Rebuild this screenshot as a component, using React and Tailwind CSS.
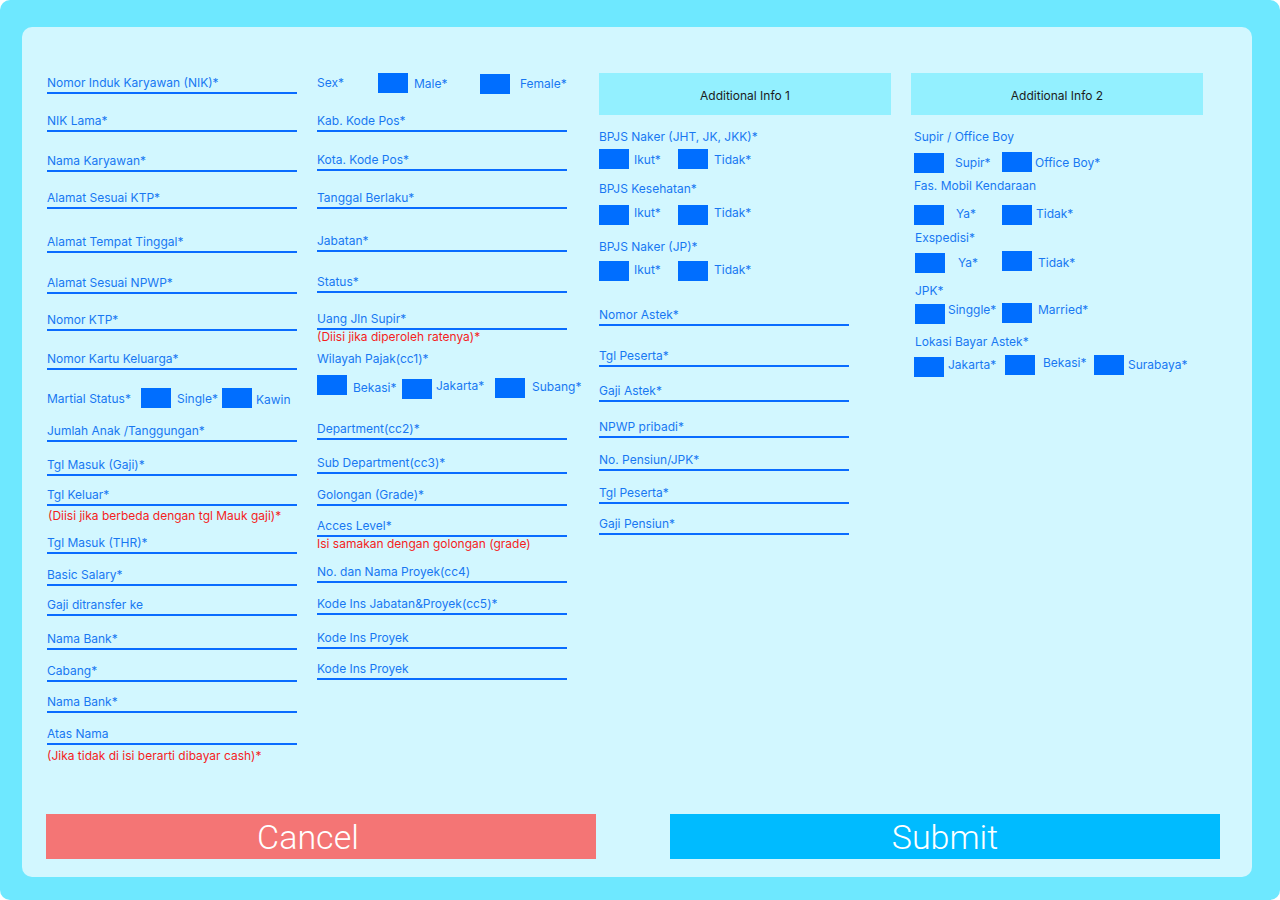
import React from "react";

const Field = ({ label, mt }) => (
  <div className={`${mt} w-[250px] h-[19px] pb-px border-b-2 border-[#0a6cff]`}>
    <p className="text-[12px] leading-4 text-[#1877f2] whitespace-nowrap">{label}</p>
  </div>
);

const Note = ({ text, mt, className = "" }) => (
  <p className={`${mt} ${className} text-[12px] leading-[14px] text-[#f51d1d] whitespace-nowrap`}>{text}</p>
);

const Label = ({ text, mt, className = "" }) => (
  <p className={`${mt} ${className} text-[12px] leading-4 text-[#1877f2] whitespace-nowrap`}>{text}</p>
);

const Box = ({ className = "" }) => <div className={`${className} w-[30px] h-5 bg-[#006eff] shrink-0`} />;

const Opt = ({ text, className = "" }) => (
  <span className={`${className} text-[12px] leading-4 text-[#1877f2] whitespace-nowrap shrink-0`}>{text}</span>
);

const Header = ({ title }) => (
  <div className="w-[292px] h-[42px] bg-[#93f0ff] flex items-center justify-center pt-[3px]">
    <span className="text-[12px] text-[#1c1c1c]">{title}</span>
  </div>
);

const App = () => {
  return (
    <div className="w-[1280px] h-[900px] bg-[#6ee8ff] rounded-[10px] pt-[27px] pl-[22px] font-['Inter',sans-serif]">
      <div className="w-[1230px] h-[850px] bg-[#d2f7ff] rounded-[10px] flex flex-col">
        <div className="flex pt-[46px] pl-[25px]">
          {/* kolom 1 */}
          <div className="w-[250px] flex flex-col">
            <Field label="Nomor Induk Karyawan (NIK)*" mt="mt-[2px]" />
            <Field label="NIK Lama*" mt="mt-[19px]" />
            <Field label="Nama Karyawan*" mt="mt-[21px]" />
            <Field label="Alamat Sesuai KTP*" mt="mt-[18px]" />
            <Field label="Alamat Tempat Tinggal*" mt="mt-[25px]" />
            <Field label="Alamat Sesuai NPWP*" mt="mt-[22px]" />
            <Field label="Nomor KTP*" mt="mt-[18px]" />
            <Field label="Nomor Kartu Keluarga*" mt="mt-[20px]" />
            <div className="mt-[18px] h-5 flex items-center">
              <Opt text="Martial Status*" className="w-[94px] mt-[2px]" />
              <Box />
              <Opt text="Single*" className="ml-[6px] w-[45px] mt-[2px]" />
              <Box />
              <Opt text="Kawin" className="ml-[4px] mt-[3px]" />
            </div>
            <Field label="Jumlah Anak /Tanggungan*" mt="mt-[15px]" />
            <Field label="Tgl Masuk (Gaji)*" mt="mt-[15px]" />
            <Field label="Tgl Keluar*" mt="mt-[11px]" />
            <Note text="(Diisi jika berbeda dengan tgl Mauk gaji)*" mt="mt-[3px]" className="ml-px" />
            <Field label="Tgl Masuk (THR)*" mt="mt-[12px]" />
            <Field label="Basic Salary*" mt="mt-[13px]" />
            <Field label="Gaji ditransfer ke" mt="mt-[11px]" />
            <Field label="Nama Bank*" mt="mt-[15px]" />
            <Field label="Cabang*" mt="mt-[13px]" />
            <Field label="Nama Bank*" mt="mt-[12px]" />
            <Field label="Atas Nama" mt="mt-[13px]" />
            <Note text="(Jika tidak di isi berarti dibayar cash)*" mt="mt-[4px]" />
          </div>

          {/* kolom 2 */}
          <div className="ml-[20px] w-[250px] flex flex-col">
            <div className="h-5 flex items-center">
              <Opt text="Sex*" className="w-[61px]" />
              <Box />
              <Opt text="Male*" className="ml-[6px] w-[66px] mt-[2px]" />
              <Box className="mt-[2px]" />
              <Opt text="Female*" className="ml-[10px] mt-[1px]" />
            </div>
            <Field label="Kab. Kode Pos*" mt="mt-[20px]" />
            <Field label="Kota. Kode Pos*" mt="mt-[20px]" />
            <Field label="Tanggal Berlaku*" mt="mt-[19px]" />
            <Field label="Jabatan*" mt="mt-[24px]" />
            <Field label="Status*" mt="mt-[22px]" />
            <Field label="Uang Jln Supir*" mt="mt-[18px]" />
            <Note text="(Diisi jika diperoleh ratenya)*" mt="mt-0" />
            <Label text="Wilayah Pajak(cc1)*" mt="mt-[7px]" />
            <div className="mt-[8px] h-[24px] flex items-start">
              <Box />
              <Opt text="Bekasi*" className="ml-[6px] w-[49px] mt-[5px]" />
              <Box className="mt-[4px]" />
              <Opt text="Jakarta*" className="ml-[4px] w-[59px] mt-[3px]" />
              <Box className="mt-[3px]" />
              <Opt text="Subang*" className="ml-[7px] mt-[4px]" />
            </div>
            <Field label="Department(cc2)*" mt="mt-[22px]" />
            <Field label="Sub Department(cc3)*" mt="mt-[15px]" />
            <Field label="Golongan (Grade)*" mt="mt-[13px]" />
            <Field label="Acces Level*" mt="mt-[12px]" />
            <Note text="Isi samakan dengan golongan (grade)" mt="mt-0" />
            <Field label="No. dan Nama Proyek(cc4)" mt="mt-[13px]" />
            <Field label="Kode Ins Jabatan&Proyek(cc5)*" mt="mt-[13px]" />
            <Field label="Kode Ins Proyek" mt="mt-[15px]" />
            <Field label="Kode Ins Proyek" mt="mt-[12px]" />
          </div>

          {/* kolom 3 */}
          <div className="ml-[32px] w-[292px] flex flex-col">
            <Header title="Additional Info 1" />
            <Label text="BPJS Naker (JHT, JK, JKK)*" mt="mt-[14px]" />
            <div className="mt-[4px] h-5 flex items-start">
              <Box />
              <Opt text="Ikut*" className="ml-[5px] w-[44px] mt-[3px]" />
              <Box />
              <Opt text="Tidak*" className="ml-[6px] mt-[3px]" />
            </div>
            <Label text="BPJS Kesehatan*" mt="mt-[12px]" />
            <div className="mt-[8px] h-5 flex items-start">
              <Box />
              <Opt text="Ikut*" className="ml-[5px] w-[44px]" />
              <Box />
              <Opt text="Tidak*" className="ml-[6px]" />
            </div>
            <Label text="BPJS Naker (JP)*" mt="mt-[14px]" />
            <div className="mt-[6px] h-5 flex items-start">
              <Box />
              <Opt text="Ikut*" className="ml-[5px] w-[44px] mt-px" />
              <Box />
              <Opt text="Tidak*" className="ml-[6px] mt-px" />
            </div>
            <Field label="Nomor Astek*" mt="mt-[26px]" />
            <Field label="Tgl Peserta*" mt="mt-[22px]" />
            <Field label="Gaji Astek*" mt="mt-[16px]" />
            <Field label="NPWP pribadi*" mt="mt-[17px]" />
            <Field label="No. Pensiun/JPK*" mt="mt-[14px]" />
            <Field label="Tgl Peserta*" mt="mt-[14px]" />
            <Field label="Gaji Pensiun*" mt="mt-[12px]" />
          </div>

          {/* kolom 4 */}
          <div className="ml-[20px] w-[292px] flex flex-col">
            <Header title="Additional Info 2" />
            <Label text="Supir / Office Boy" mt="mt-[14px]" className="ml-[3px]" />
            <div className="mt-[7px] ml-[3px] h-[21px] flex items-start">
              <Box className="mt-px" />
              <Opt text="Supir*" className="ml-[11px] w-[47px] mt-[3px]" />
              <Box />
              <Opt text="Office Boy*" className="ml-[3px] mt-[3px]" />
            </div>
            <Label text="Fas. Mobil Kendaraan" mt="mt-[5px]" className="ml-[3px]" />
            <div className="mt-[11px] ml-[3px] h-5 flex items-start">
              <Box />
              <Opt text="Ya*" className="ml-[12px] w-[46px] mt-px" />
              <Box />
              <Opt text="Tidak*" className="ml-[4px] mt-px" />
            </div>
            <Label text="Exspedisi*" mt="mt-[5px]" className="ml-[4px]" />
            <div className="mt-[5px] ml-[4px] h-[22px] flex items-start">
              <Box className="mt-[2px]" />
              <Opt text="Ya*" className="ml-[13px] w-[44px] mt-[4px]" />
              <Box />
              <Opt text="Tidak*" className="ml-[6px] mt-[4px]" />
            </div>
            <Label text="JPK*" mt="mt-[10px]" className="ml-[4px]" />
            <div className="mt-[3px] ml-[4px] h-[22px] flex items-start">
              <Box className="mt-[2px]" />
              <Opt text="Singgle*" className="ml-[3px] w-[54px]" />
              <Box className="mt-px" />
              <Opt text="Married*" className="ml-[6px]" />
            </div>
            <Label text="Lokasi Bayar Astek*" mt="mt-[10px]" className="ml-[4px]" />
            <div className="mt-[5px] ml-[3px] h-[22px] flex items-start">
              <Box className="mt-[2px]" />
              <Opt text="Jakarta*" className="ml-[4px] w-[57px] mt-[2px]" />
              <Box />
              <Opt text="Bekasi*" className="ml-[8px] w-[51px]" />
              <Box />
              <Opt text="Surabaya*" className="ml-[4px] mt-[2px]" />
            </div>
          </div>
        </div>

        {/* tombol */}
        <div className="mt-auto mb-[18px] pl-[24px] flex">
          <button className="w-[550px] h-[45px] pr-[26px] bg-[#f47575] text-white text-[34px] font-light font-['Roboto',sans-serif] leading-none">
            Cancel
          </button>
          <button className="ml-[74px] w-[550px] h-[45px] bg-[#00bbff] text-white text-[34px] font-light font-['Roboto',sans-serif] leading-none">
            Submit
          </button>
        </div>
      </div>
    </div>
  );
};

export default App;
